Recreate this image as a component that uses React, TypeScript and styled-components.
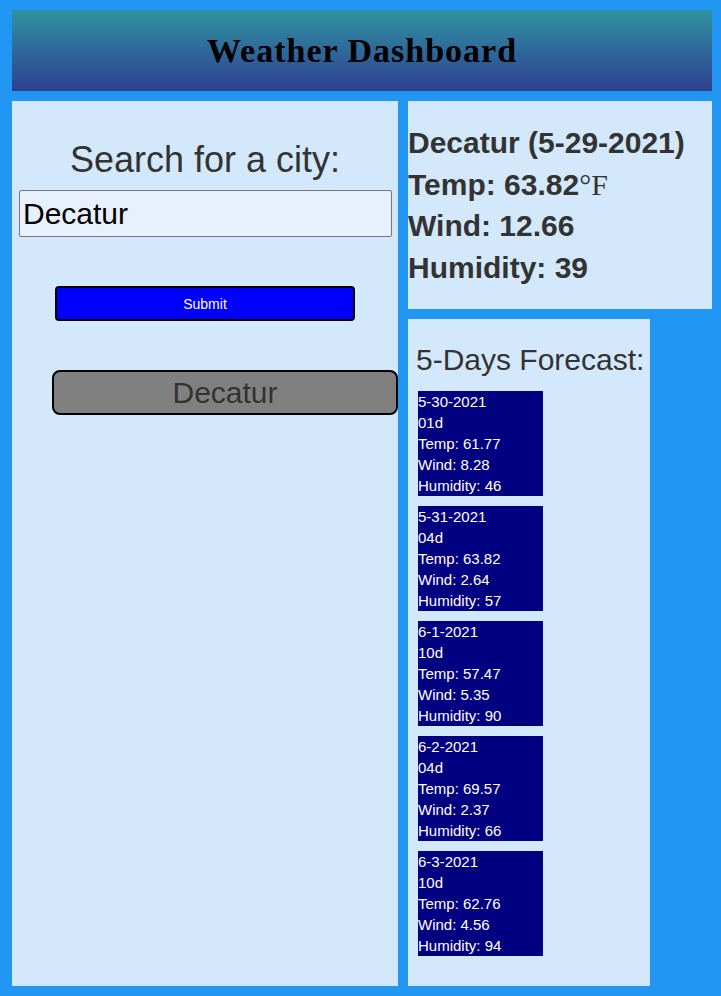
import React from "react";
import styled, { createGlobalStyle } from "styled-components";

const GlobalStyle = createGlobalStyle`
  html, body {
    margin: 0;
    padding: 0;
    background: #2196f3;
  }
  body {
    font-family: "Liberation Sans", Arial, sans-serif;
  }
`;

const Page = styled.div`
  width: 700px;
  padding: 10px 9px 10px 12px;
  display: flex;
  flex-direction: column;
  gap: 10px;
`;

const Header = styled.header`
  height: 81px;
  background: linear-gradient(to bottom, #2f93a1, #2f3f92);
  display: flex;
  align-items: center;
  justify-content: center;
`;

const Title = styled.h1`
  margin: 0;
  font-family: "Liberation Serif", "Times New Roman", serif;
  font-weight: bold;
  font-size: 34px;
  letter-spacing: 1px;
  color: #000;
`;

const Main = styled.main`
  display: flex;
  gap: 10px;
  height: 885px;
`;

const SearchPanel = styled.section`
  width: 386px;
  background: #d3e9fb;
  padding-top: 39px;
  box-sizing: border-box;
  display: flex;
  flex-direction: column;
`;

const SearchLabel = styled.h2`
  margin: 0;
  font-size: 36px;
  line-height: 40px;
  font-weight: normal;
  color: #333;
  text-align: center;
`;

const CityInput = styled.input`
  margin: 10px 0 0 7px;
  width: 373px;
  height: 47px;
  box-sizing: border-box;
  border: 1px solid #767676;
  border-radius: 2px;
  background: #e8f0fe;
  padding: 1px 3px;
  font-family: "Liberation Sans", Arial, sans-serif;
  font-size: 30px;
  color: #000;
  outline: none;
`;

const SubmitButton = styled.button`
  margin: 49px 0 0 43px;
  width: 300px;
  height: 35px;
  box-sizing: border-box;
  background: #0000ff;
  border: 2px solid #000;
  border-radius: 4px;
  color: #fff;
  font-family: "Liberation Sans", Arial, sans-serif;
  font-size: 14px;
  padding: 0;
`;

const HistoryButton = styled.button`
  margin: 49px 0 0 40px;
  width: 346px;
  height: 45px;
  box-sizing: border-box;
  background: #808080;
  border: 2px solid #000;
  border-radius: 8px;
  color: #333;
  font-family: "Liberation Sans", Arial, sans-serif;
  font-size: 30px;
  padding: 0;
`;

const RightColumn = styled.div`
  width: 304px;
  display: flex;
  flex-direction: column;
  gap: 10px;
`;

const CurrentPanel = styled.section`
  height: 208px;
  box-sizing: border-box;
  background: #d3e9fb;
  padding: 21px 0 0 0;
`;

const CurrentLine = styled.div`
  font-size: 30px;
  line-height: 41.5px;
  font-weight: bold;
  color: #333;
  white-space: nowrap;
`;

const Unit = styled.span`
  font-family: "Liberation Serif", "Times New Roman", serif;
  font-weight: normal;
`;

const ForecastPanel = styled.section`
  width: 242px;
  flex: 1;
  box-sizing: border-box;
  background: #d3e9fb;
  padding-top: 23px;
`;

const ForecastTitle = styled.h2`
  margin: 0 0 13px 0;
  padding-left: 8px;
  font-size: 30px;
  line-height: 36px;
  font-weight: normal;
  color: #333;
  white-space: nowrap;
`;

const CardList = styled.div`
  display: flex;
  flex-direction: column;
  gap: 10px;
  padding-left: 10px;
`;

const Card = styled.div`
  width: 125px;
  height: 105px;
  background: #000080;
  color: #fff;
  font-size: 15px;
  line-height: 21px;
`;

const forecast = [
  { date: "5-30-2021", icon: "01d", temp: "61.77", wind: "8.28", hum: "46" },
  { date: "5-31-2021", icon: "04d", temp: "63.82", wind: "2.64", hum: "57" },
  { date: "6-1-2021", icon: "10d", temp: "57.47", wind: "5.35", hum: "90" },
  { date: "6-2-2021", icon: "04d", temp: "69.57", wind: "2.37", hum: "66" },
  { date: "6-3-2021", icon: "10d", temp: "62.76", wind: "4.56", hum: "94" },
];

export default function App() {
  return (
    <>
      <GlobalStyle />
      <Page>
        <Header>
          <Title>Weather Dashboard</Title>
        </Header>
        <Main>
          <SearchPanel>
            <SearchLabel>Search for a city:</SearchLabel>
            <CityInput defaultValue="Decatur" />
            <SubmitButton>Submit</SubmitButton>
            <HistoryButton>Decatur</HistoryButton>
          </SearchPanel>
          <RightColumn>
            <CurrentPanel>
              <CurrentLine>Decatur (5-29-2021)</CurrentLine>
              <CurrentLine>
                Temp: 63.82<Unit>°F</Unit>
              </CurrentLine>
              <CurrentLine>Wind: 12.66</CurrentLine>
              <CurrentLine>Humidity: 39</CurrentLine>
            </CurrentPanel>
            <ForecastPanel>
              <ForecastTitle>5-Days Forecast:</ForecastTitle>
              <CardList>
                {forecast.map((d) => (
                  <Card key={d.date}>
                    <div>{d.date}</div>
                    <div>{d.icon}</div>
                    <div>Temp: {d.temp}</div>
                    <div>Wind: {d.wind}</div>
                    <div>Humidity: {d.hum}</div>
                  </Card>
                ))}
              </CardList>
            </ForecastPanel>
          </RightColumn>
        </Main>
      </Page>
    </>
  );
}
